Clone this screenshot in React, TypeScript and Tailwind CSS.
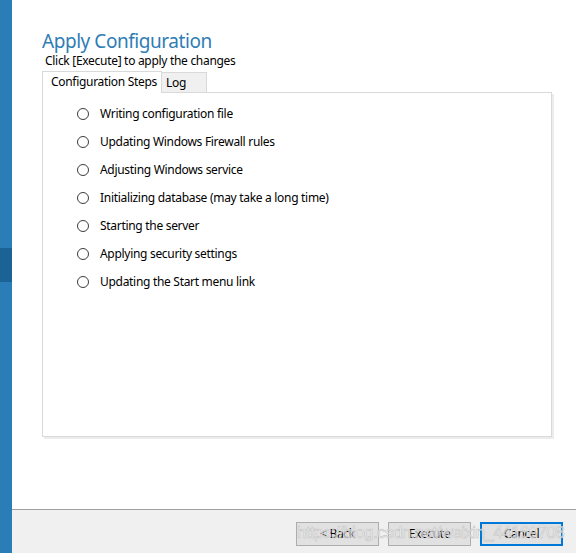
import React from "react";

const steps = [
  "Writing configuration file",
  "Updating Windows Firewall rules",
  "Adjusting Windows service",
  "Initializing database (may take a long time)",
  "Starting the server",
  "Applying security settings",
  "Updating the Start menu link",
];

function Radio() {
  return (
    <span className="w-[12px] h-[12px] rounded-full border border-[#3c3c3c] bg-white shrink-0" />
  );
}

export default function App() {
  return (
    <div
      className="w-[576px] h-[553px] flex bg-white overflow-hidden text-[12px] text-black tracking-[-0.3px]"
      style={{ fontFamily: "'Noto Sans', 'Open Sans', sans-serif" }}
    >
      {/* left accent strip */}
      <div className="w-[12px] flex flex-col shrink-0">
        <div className="h-[248px] bg-[#2a7db7]" />
        <div className="h-[34px] bg-[#1b6394]" />
        <div className="flex-1 bg-[#2a7db7]" />
      </div>

      <div className="flex-1 flex flex-col">
        <div className="h-[509px] pl-[30px] pr-[22px] pt-[29px] flex flex-col">
          <div className="text-[19px] leading-[24px] text-[#2f7db5] tracking-[-0.45px]">Apply Configuration</div>
          <div className="ml-[3px] leading-[16px]">Click [Execute] to apply the changes</div>

          <div className="flex mt-[2px] h-[21px] items-end">
            <div className="h-[22px] w-[120px] border border-b-0 border-[#d9d9d9] bg-white pl-[8px] leading-[20px] relative top-[1px] whitespace-nowrap">
              Configuration Steps
            </div>
            <div className="h-[20px] w-[45px] border border-l-0 border-b-0 border-[#d9d9d9] bg-[#f0f0f0] pl-[4px] leading-[20px]">
              Log
            </div>
          </div>

          <div className="w-[510px] h-[345px] border border-[#d9d9d9] shadow-[2px_2px_0_#ececec] flex flex-col pt-[12px] pl-[34px] gap-[10px]">
            {steps.map((s) => (
              <div key={s} className="flex items-center h-[18px]">
                <Radio />
                <span className="ml-[11px]">{s}</span>
              </div>
            ))}
          </div>
        </div>

        <div className="flex-1 bg-[#f0f0f0] border-t border-[#a0a0a0] flex justify-end items-start pt-[12px] pr-[13px] gap-[9px] relative">
          <button className="w-[83px] h-[24px] border border-[#adadad] bg-[#e1e1e1] leading-[22px]">
            &lt; Back
          </button>
          <button className="w-[83px] h-[24px] border border-[#adadad] bg-[#e1e1e1] leading-[22px]">
            Execute
          </button>
          <button className="w-[83px] h-[24px] border-2 border-[#0078d7] bg-[#e1e1e1] leading-[20px]">
            Cancel
          </button>
          <span
            className="absolute left-[285px] top-[12px] text-[17px] leading-[22px] text-white/60 [-webkit-text-stroke:0.6px_#c4c4c4] pointer-events-none whitespace-nowrap tracking-[-0.6px]"
            style={{ fontFamily: "'Liberation Sans', sans-serif" }}
          >
            https://blog.csdn.net/weixin_44169708
          </span>
        </div>
      </div>
    </div>
  );
}
